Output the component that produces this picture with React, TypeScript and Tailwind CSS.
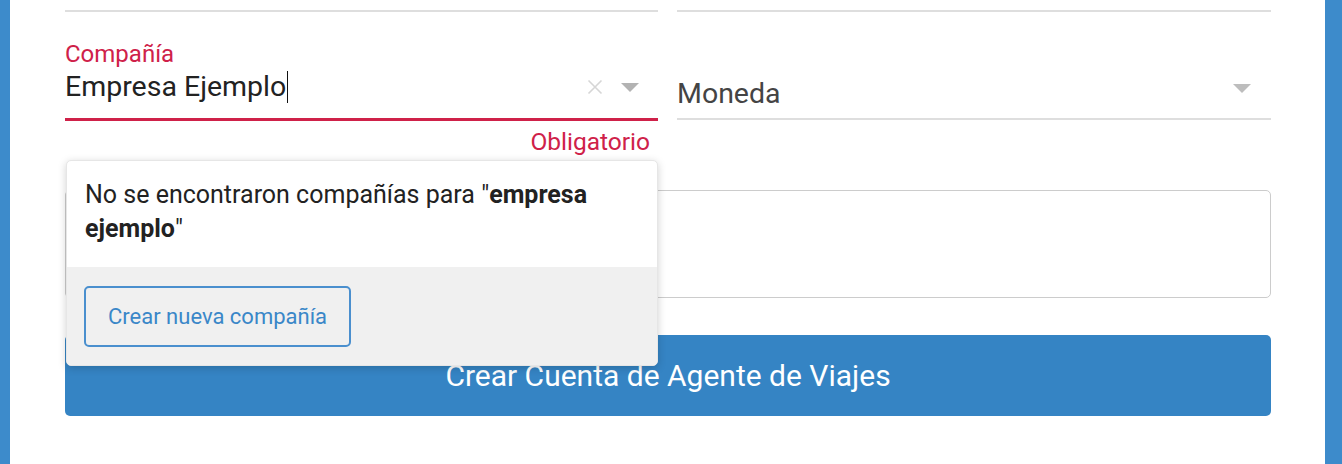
import React from "react";

function ClearIcon() {
  return (
    <svg width="16" height="16" viewBox="0 0 16 16" className="shrink-0">
      <path d="M1.5 1.5 L14.5 14.5 M14.5 1.5 L1.5 14.5" stroke="#d6d6d6" strokeWidth="1.6" fill="none" />
    </svg>
  );
}

function Caret({ color }: { color: string }) {
  return (
    <svg width="18" height="9" viewBox="0 0 18 9" className="shrink-0">
      <polygon points="0,0 18,0 9,9" fill={color} />
    </svg>
  );
}

export default function App() {
  return (
    <div className="flex h-[464px] w-[1342px] overflow-hidden bg-white font-['Roboto','Liberation_Sans',sans-serif]">
      <div className="w-[10px] shrink-0 bg-[#3d8bcb]" />
      <div className="flex-1 pl-[55px] pr-[54px]">
        <div className="grid grid-cols-[593px_594px] gap-x-[19px]">
          {/* Left column */}
          <div className="relative">
            <div className="mt-[10px] h-[2px] bg-[#dedede]" />
            <div className="pt-[28px]">
              <div className="text-[24px] leading-[28px] text-[#cf2149]">Compañía</div>
              <div className="mt-[1px] flex items-center pb-[13px] pr-[19px]">
                <div className="flex flex-1 items-center text-[28.5px] leading-[36px] text-[#222]">
                  <span>Empresa Ejemplo</span>
                  <span className="ml-[1px] inline-block h-[32px] w-px bg-[#111]" />
                </div>
                <ClearIcon />
                <div className="ml-[18px]">
                  <Caret color="#b3b3b3" />
                </div>
              </div>
              <div className="h-[3px] bg-[#cf2149]" />
              <div className="mt-[7px] pr-[8px] text-right text-[24.5px] leading-[28px] text-[#cf2149]">
                Obligatorio
              </div>
            </div>

            {/* Dropdown popup */}
            <div className="absolute left-[1px] top-[160px] z-10 w-[592px] overflow-hidden rounded-[5px] border border-[#e6e6e6] bg-white shadow-[0_2px_8px_rgba(0,0,0,0.18)]">
              <p className="px-[18px] pb-[21px] pt-[17px] text-[25px] leading-[34px] text-[#222]">
                No se encontraron compañías para "<b className="font-bold">empresa</b>
                <br />
                <b className="font-bold">ejemplo</b>"
              </p>
              <div className="bg-[#f0f0f0] px-[17px] pb-[18px] pt-[19px]">
                <button className="h-[61px] rounded-[5px] border-2 border-[#4a8fce] px-[22px] text-[22px] leading-[28px] text-[#3a87c8]">
                  Crear nueva compañía
                </button>
              </div>
            </div>
          </div>

          {/* Right column */}
          <div>
            <div className="mt-[10px] h-[2px] bg-[#dedede]" />
            <div className="flex h-[106px] items-start pr-[20px]">
              <div className="mt-[64px] flex-1 text-[28.5px] leading-[36px] text-[#444]">Moneda</div>
              <div className="mt-[72px]">
                <Caret color="#bdbdbd" />
              </div>
            </div>
            <div className="h-[2px] bg-[#dedede]" />
          </div>
        </div>

        <div className="mt-[34px] h-[108px] rounded-[5px] border border-[#cccccc] bg-white" />

        <button className="mt-[37px] flex h-[81px] w-full items-center justify-center rounded-[5px] bg-[#3584c4] text-[30px] leading-[36px] text-white">
          Crear Cuenta de Agente de Viajes
        </button>
      </div>
      <div className="w-[17px] shrink-0 bg-[#3d8bcb]" />
    </div>
  );
}
